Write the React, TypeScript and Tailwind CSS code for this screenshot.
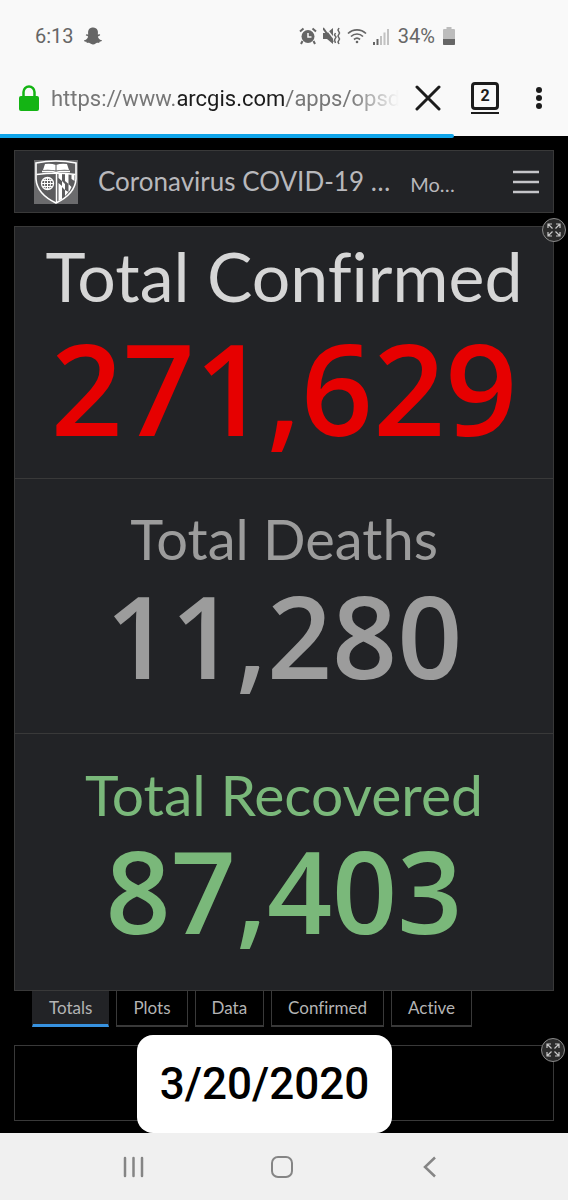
import React from "react";
import { FaSnapchatGhost } from "react-icons/fa";

const stats = [
  {
    label: "Total Confirmed",
    value: "271,629",
    color: "text-[#e60000]",
    labelColor: "text-[#d6d6d6]",
    labelSize: "text-[68px] leading-[90px]",
    valueSize: "text-[126px] leading-[132px]",
    box: "pt-1 pb-[25px]",
  },
  {
    label: "Total Deaths",
    value: "11,280",
    color: "text-[#9c9c9c]",
    labelColor: "text-[#9c9c9c]",
    labelSize: "text-[56px] leading-[72px]",
    valueSize: "text-[114px] leading-[120px]",
    box: "pt-6 pb-[38px]",
  },
  {
    label: "Total Recovered",
    value: "87,403",
    color: "text-[#7ab87a]",
    labelColor: "text-[#7ab87a]",
    labelSize: "text-[57px] leading-[72px]",
    valueSize: "text-[114px] leading-[120px]",
    box: "pt-6 pb-10",
  },
];

const tabs = ["Totals", "Plots", "Data", "Confirmed", "Active"];

const StatusIcons = () => (
  <div className="flex items-center">
    <svg width="18" height="18" viewBox="0 0 18 18" fill="#666">
      <circle cx="9" cy="9.5" r="6.5" />
      <path d="M3.500 14l-1.500 3M14.500 14l1.500 3M1 4.500L4.500 1.500M17 4.500L13.500 1.500" stroke="#666" strokeWidth="2" />
      <path d="M9 6v4h3.500" fill="none" stroke="#f8f8f8" strokeWidth="1.500" />
    </svg>
    <svg className="ml-1.5" width="18" height="18" viewBox="0 0 18 18" fill="#666">
      <path d="M0 6h4l6-5v16l-6-5H0z" />
      <path d="M2 0l10 13" stroke="#f8f8f8" strokeWidth="1.500" />
      <path d="M0 1l10 14" stroke="#666" strokeWidth="2" />
      <path d="M12.500 6l-1 2 1.500 2-1.500 3 1 3M16 1l-1 2 1.500 3-1.500 3 1.500 3-1.500 3 1 2" fill="none" stroke="#666" strokeWidth="1.500" />
    </svg>
    <svg className="ml-1.5" width="20" height="16" viewBox="0 0 20 16" fill="none" stroke="#666" strokeWidth="1.700">
      <path d="M1 5.500a13 13 0 0 1 18 0M4 8.500a8.500 8.500 0 0 1 12 0M7 11.500a4.500 4.500 0 0 1 6 0" />
      <circle cx="10" cy="14" r="1.300" fill="#666" stroke="none" />
    </svg>
    <svg className="ml-1.5" width="17" height="17" viewBox="0 0 17 17">
      <path d="M1 17v-3M4.500 17v-6" stroke="#666" strokeWidth="2" />
      <path d="M8 17V8M11.500 17V4.500M15 17V1" stroke="#c2c2c2" strokeWidth="2" />
    </svg>
    <span className="mx-2 text-xl">34%</span>
    <svg width="12" height="18" viewBox="0 0 12 18">
      <path d="M3.500 0h5v2H11q1 0 1 1v14q0 1-1 1H1q-1 0-1-1V3q0-1 1-1h2.500z" fill="#bcbcbc" />
      <path d="M0 12h12v5q0 1-1 1H1q-1 0-1-1z" fill="#666" />
    </svg>
  </div>
);

const Shield = () => (
  <svg className="shrink-0" width="44" height="44" viewBox="0 0 44 44" fill="none" stroke="#fff">
    <path d="M0 0h44v44H0z" fill="#6b6b6d" stroke="none" />
    <path d="M2 3Q22-1 42 3v16Q41 34 22 43 3 34 2 19z" fill="#5c5c5e" strokeWidth="1.600" />
    <path d="M2.500 14.500Q22 12 41.500 14.500" strokeWidth="1.500" />
    <path d="M11 4q6-1 11 1 5-2 11-1l2 6q-7-1-13 1-6-2-13-1z" fill="#fff" stroke="none" />
    <path d="M22 5v6M8 11h28" stroke="#5c5c5e" />
    <path d="M8 11.500h10l4 1 4-1h10" strokeWidth="1.300" />
    <circle cx="13.500" cy="23.500" r="6" strokeWidth="1.300" />
    <ellipse cx="13.500" cy="23.500" rx="3" ry="6" />
    <path d="M13.500 17.500v12M7.500 23.500h12M8.500 20.500h10M8.500 26.500h10" />
    <path d="M22.500 14v29" strokeWidth="1.500" />
    <path d="M24.500 14h3.500v7l-3.500-3zM31 14h3.500v10L31 21zM37.500 15h3v6l-3-2zM24.500 23l3.500 3v13l-3.500 2zM28 21l3 3v6l-3-3zM31 30l3.500 2-3.500 4zM34.500 24l3 3-2 4-1 1z" fill="#fff" stroke="none" />
  </svg>
);

const ExpandButton = () => (
  <button
    aria-label="Expand"
    className="absolute -top-2 -right-3 flex size-6 items-center justify-center rounded-full border border-[#8a8a8a] bg-[#2b2b2b]"
  >
    <svg width="14" height="14" viewBox="0 0 14 14" fill="none" stroke="#c8c8c8" strokeWidth="1.200">
      <path d="M1 5V1h4M1 1l4.500 4.500M9 1h4v4M13 1L8.500 5.500M1 9v4h4M1 13l4.500-4.500M9 13h4V9M13 13L8.500 8.500" />
    </svg>
  </button>
);

const App = () => {
  return (
    <div className="min-h-screen flex flex-col bg-black font-['Lato',sans-serif] [font-variant-ligatures:none]">
      <header className="bg-[#f9f9f9] font-['Roboto',sans-serif] text-[#666]">
        <div className="flex items-center justify-between h-[72px] pl-[35px] pr-[113px]">
          <div className="flex items-center gap-2.5 text-xl">
            <span>6:13</span>
            <FaSnapchatGhost size={18} />
          </div>
          <StatusIcons />
        </div>
        <div className="flex items-center h-[52px] mb-[10px] pl-[19px] pr-6">
          <svg className="shrink-0" width="20" height="26" viewBox="0 0 20 26">
            <path d="M4.500 13V7a5.500 5.500 0 0 1 11 0v6" fill="none" stroke="#14b414" strokeWidth="2.500" />
            <rect y="11" width="20" height="15" rx="2" fill="#14b414" />
          </svg>
          <a
            href="#"
            className="ml-3 flex-1 overflow-hidden whitespace-nowrap text-[22px] text-[#777] [mask-image:linear-gradient(to_right,black_86%,transparent)]"
          >
            https://www.<span className="text-[#1c1c1c]">arcgis.com</span>/apps/opsd
          </a>
          <button aria-label="Stop loading" className="ml-4">
            <svg width="26" height="26" viewBox="0 0 26 26" stroke="#1c1c1c" strokeWidth="3" strokeLinecap="round">
              <path d="M2 2l22 22M24 2L2 24" />
            </svg>
          </button>
          <button
            aria-label="Tabs"
            className="ml-[30px] flex flex-col items-center gap-0.5 text-[#1c1c1c]"
          >
            <span className="flex size-7 items-center justify-center rounded border-3 border-[#1c1c1c] text-base leading-5 font-bold">
              2
            </span>
            <span className="h-0.5 w-7 bg-[#1c1c1c]" />
          </button>
          <button aria-label="Menu" className="ml-[35px]">
            <svg width="10" height="24" viewBox="0 0 10 24" fill="#1c1c1c">
              <circle cx="5" cy="4" r="3" />
              <circle cx="5" cy="12" r="3" />
              <circle cx="5" cy="20" r="3" />
            </svg>
          </button>
        </div>
        <div className="h-1 bg-linear-to-b from-[#f9f9f9] from-50% to-black to-50%">
          <div className="h-full w-4/5 rounded-r bg-[#10a5ea]" />
        </div>
      </header>

      <main className="relative flex-1 px-3.5 pt-3">
        <div className="flex items-center h-[63px] border border-[#393939] bg-[#222326] pl-[19px] pr-3.5 text-[#b8b8bc]">
          <Shield />
          <h1 className="ml-5 whitespace-nowrap text-[26px]">
            Coronavirus COVID-19 …
          </h1>
          <span className="ml-5 pt-1 text-xl">Mo…</span>
          <button aria-label="Open menu" className="ml-auto">
            <svg width="26" height="24" viewBox="0 0 26 24" stroke="#c4c4c8" strokeWidth="2.500">
              <path d="M0 2h26M0 12h26M0 22h26" />
            </svg>
          </button>
        </div>

        <div className="relative mt-[13px]">
          <div className="border border-[#393939] bg-[#222326] divide-y divide-[#393939]">
            {stats.map((stat) => (
              <section key={stat.label} className={`text-center whitespace-nowrap ${stat.box}`}>
                <h2 className={`${stat.labelSize} ${stat.labelColor}`}>
                  {stat.label}
                </h2>
                <p className={`font-['Open_Sans',sans-serif] font-semibold ${stat.valueSize} ${stat.color}`}>
                  {stat.value}
                </p>
              </section>
            ))}
          </div>
          <ExpandButton />
        </div>

        <nav className="flex gap-[7px] pl-[18px] text-[17px] text-[#b4b4b4]">
          {tabs.map((tab, i) => (
            <button
              key={tab}
              className={`h-9 px-4 border-x ${
                i === 0
                  ? "border-x-[#222326] bg-[#222326] border-b-3 border-b-[#3792e0]"
                  : "border-[#393939] border-b-2"
              }`}
            >
              {tab}
            </button>
          ))}
        </nav>

        <div className="relative mt-[18px] h-[76px] border border-[#393939]">
          <ExpandButton />
        </div>

        <div className="absolute bottom-0 left-[137px] flex h-[98px] w-[255px] items-center justify-center rounded-2xl bg-white font-['Roboto',sans-serif] text-[44px] font-medium text-black">
          3/20/2020
        </div>
      </main>

      <footer className="flex items-center justify-center h-[67px] bg-[#f0f0f0] pr-1">
        <button aria-label="Recents" className="flex w-[148px] justify-center">
          <svg width="22" height="22" viewBox="0 0 22 22" stroke="#858585" strokeWidth="2.500" strokeLinecap="round">
            <path d="M2 2v18M10.500 2v18M19 2v18" />
          </svg>
        </button>
        <button aria-label="Home" className="flex w-[148px] justify-center">
          <span className="size-[22px] rounded-[7px] border-2 border-[#858585]" />
        </button>
        <button aria-label="Back" className="flex w-[148px] justify-center">
          <svg width="14" height="22" viewBox="0 0 14 22" fill="none" stroke="#858585" strokeWidth="2.500">
            <path d="M12 1.500L2 11l10 9.500" />
          </svg>
        </button>
      </footer>
    </div>
  );
};

export default App;
